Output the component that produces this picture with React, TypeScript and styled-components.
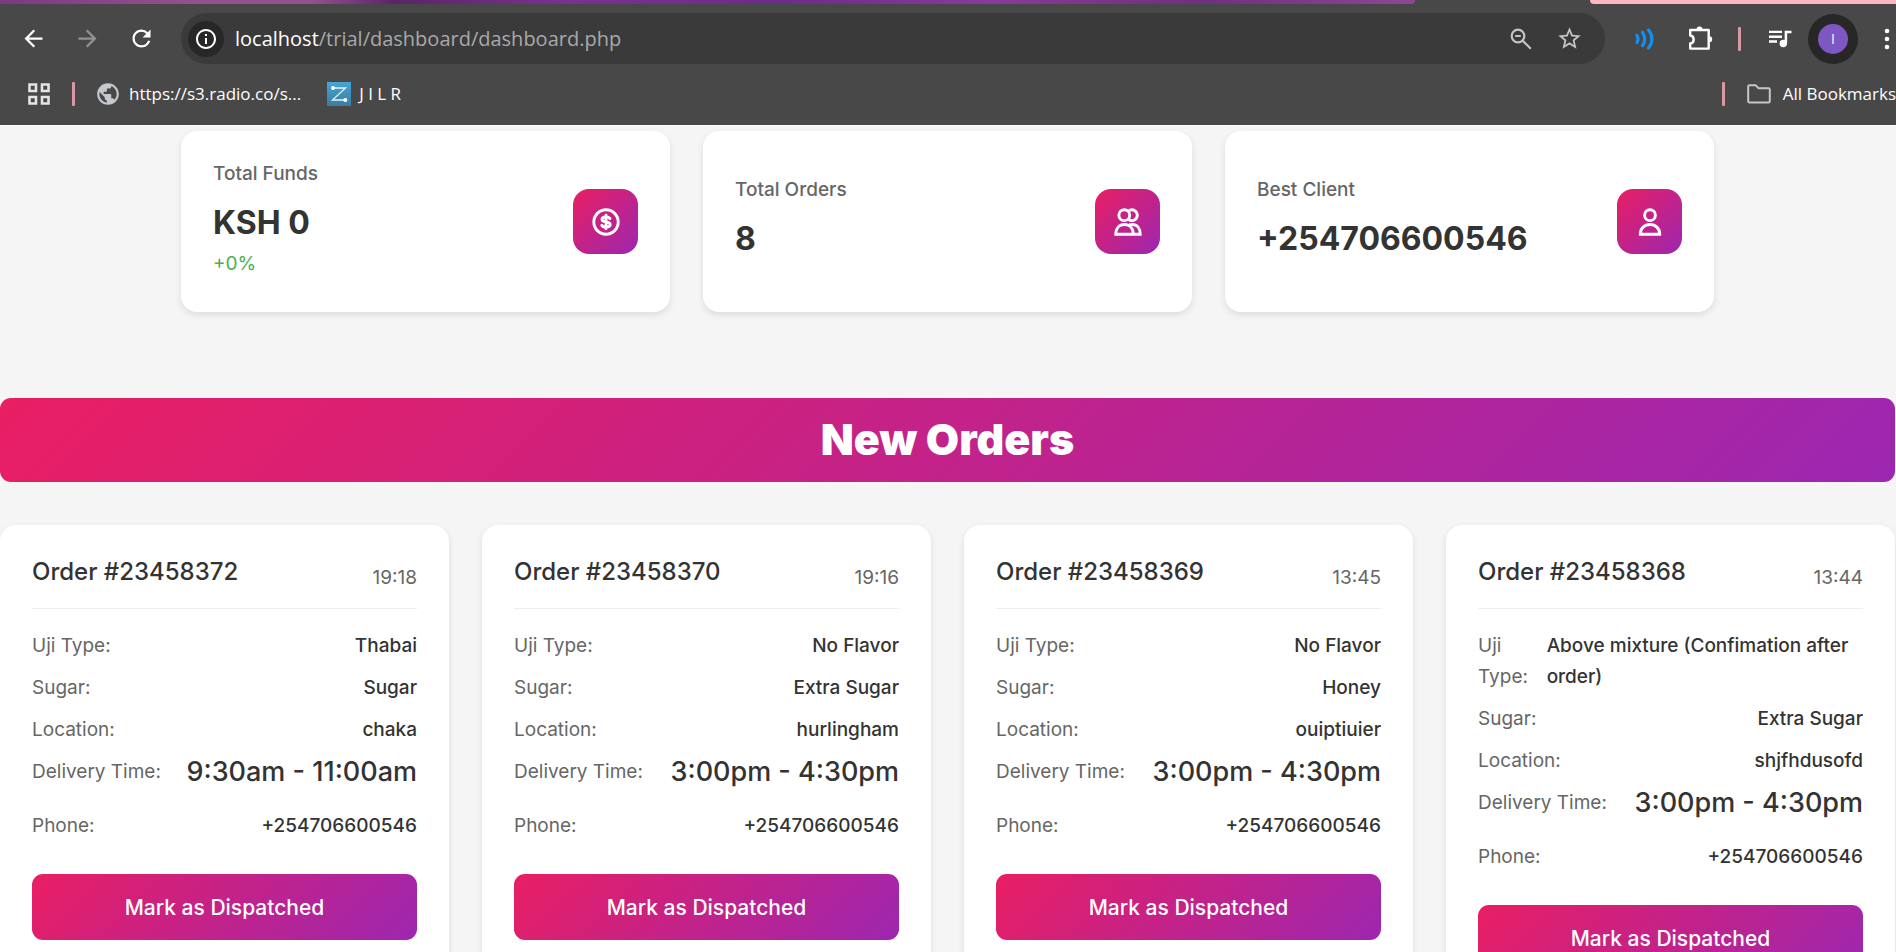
import React from 'react';
import styled, { createGlobalStyle } from 'styled-components';
import {
  MdArrowBack, MdArrowForward, MdRefresh, MdInfoOutline, MdStarBorder, MdPublic,
} from 'react-icons/md';

const brand = 'linear-gradient(135deg, #e91e63, #9c27b0)';

const GlobalStyle = createGlobalStyle`
  *, *::before, *::after { box-sizing: border-box; }
  body { margin: 0; background: #f5f5f5; font-family: Inter, "Liberation Sans", sans-serif; color: #333; }
  h1, h2, p, dl, dd { margin: 0; }
  button, input { font: inherit; }
  svg { display: block; flex: none; }
`;

const Shell = styled.div`
  height: 100vh;
  display: flex;
  flex-direction: column;
  overflow: hidden;
`;

/* Browser frame */
const Chrome = styled.header`
  flex: none;
  background: #484848;
  color: #fff;
  font-family: "Open Sans", "Noto Sans", sans-serif;
  overflow: hidden;
`;

const TabStrip = styled.div`
  display: flex;
  justify-content: space-between;
  height: 4px;
`;

const ThemeArt = styled.div`
  flex: 1415;
  border-bottom-right-radius: 4px;
  background: linear-gradient(90deg, #7c3a80, #95508f 14%, #94508f 22%, #5a2568 28%, #7a3190 40%, #6c2c86 55%, #8a3a98 70%, #6f2f80 85%, #8d4795);
`;

const TabGap = styled.div`
  flex: 175;
`;

const ActiveEdge = styled.div`
  flex: 306;
  border-bottom-left-radius: 6px;
  background: #ffb6c1;
`;

const Toolbar = styled.div`
  display: flex;
  align-items: center;
  padding: 9px 0 0 6px;
`;

const ToolButton = styled.button<{ $w?: number; $dim?: boolean }>`
  flex: none;
  display: flex;
  align-items: center;
  justify-content: center;
  width: ${(p) => p.$w ?? 54}px;
  height: 50px;
  padding: 0;
  border: 0;
  background: none;
  color: ${(p) => (p.$dim ? '#929292' : '#fff')};
`;

const AddressBar = styled.div`
  flex: 1;
  display: flex;
  align-items: center;
  height: 51px;
  margin: 0 12px 0 13px;
  padding: 0 12px 0 7px;
  border-radius: 26px;
  background: #3a3a3a;
  color: #c4c4c4;
`;

const SiteInfo = styled.button`
  display: flex;
  align-items: center;
  justify-content: center;
  width: 36px;
  height: 36px;
  padding: 0;
  border: 0;
  border-radius: 50%;
  background: #272727;
  color: #fff;
`;

const Url = styled.p`
  flex: 1;
  margin-left: 11px;
  font-size: 20px;
  line-height: 28px;
  color: #a9a9a9;
`;

const Host = styled.span`
  color: #fff;
`;

const BarButton = styled.button`
  display: flex;
  align-items: center;
  justify-content: center;
  width: 48px;
  height: 40px;
  padding: 0;
  border: 0;
  background: none;
  color: inherit;
`;

const Divider = styled.span`
  flex: none;
  width: 3px;
  height: 24px;
  border-radius: 1px;
  background: #d79aa5;
`;

const ToolDivider = styled(Divider)`
  margin: 0 11px 0 9px;
`;

const Profile = styled.button`
  flex: none;
  display: flex;
  align-items: center;
  justify-content: center;
  width: 50px;
  height: 50px;
  padding: 0;
  border: 0;
  border-radius: 50%;
  background: #272727;
`;

const Avatar = styled.span`
  width: 30px;
  height: 30px;
  border-radius: 50%;
  background: #7e57c2;
  color: #fff;
  font-size: 14px;
  line-height: 30px;
  text-align: center;
`;

const MenuButton = styled(ToolButton)`
  justify-content: flex-end;
`;

const Bookmarks = styled.nav`
  display: flex;
  align-items: center;
  height: 61px;
  padding: 0 0 2px 28px;
  font-size: 17px;
  line-height: 24px;
  white-space: nowrap;
`;

const AppsButton = styled.button`
  display: flex;
  margin-right: 22px;
  padding: 0;
  border: 0;
  background: none;
  color: #e4e4e4;
`;

const Bookmark = styled.a`
  display: flex;
  align-items: center;
  gap: 8px;
  margin-left: 20px;
  color: #fff;
  text-decoration: none;
  & + & { margin-left: 26px; }
`;

const AllBookmarks = styled.div`
  display: flex;
  align-items: center;
  margin-left: auto;
`;

const FolderLink = styled(Bookmark)`
  gap: 12px;
  margin-left: 22px;
`;

/* Dashboard page */
const Page = styled.main`
  flex: 1;
  overflow-y: auto;
  scrollbar-width: none;
  padding-right: 1px;
  border-top: 1px solid #fff;
  background: #f5f5f5;
`;

const Stats = styled.section`
  display: grid;
  grid-template-columns: repeat(3, 1fr);
  gap: 33px;
  max-width: 1533px;
  margin: 0 auto;
  padding-top: 5px;
`;

const Card = styled.article`
  border-radius: 16px;
  background: #fff;
  box-shadow: 0 3px 7px rgba(0, 0, 0, 0.1);
`;

const StatCard = styled(Card)`
  display: flex;
  align-items: center;
  justify-content: space-between;
  padding: 27px 32px;
`;

const StatText = styled.div`
  padding-bottom: 6px;
  font-size: 19px;
  line-height: 31px;
`;

const StatLabel = styled.p`
  color: #666;
  font-weight: 500;
`;

const StatValue = styled.p`
  margin-top: 8px;
  font-size: 32px;
  line-height: 51px;
  font-weight: 700;
`;

const StatChange = styled.p`
  color: #4caf50;
`;

const StatIcon = styled.span`
  display: flex;
  align-items: center;
  justify-content: center;
  width: 65px;
  height: 65px;
  border-radius: 16px;
  background: ${brand};
  color: #fff;
`;

const Banner = styled.h1`
  margin: 86px 0 43px;
  padding: 15px 16px 17px;
  border-radius: 11px;
  background: ${brand};
  color: #fff;
  font-size: 43px;
  line-height: 52px;
  font-weight: 900;
  text-align: center;
`;

const Orders = styled.section`
  display: grid;
  grid-template-columns: repeat(4, 1fr);
  gap: 33px;
`;

const OrderCard = styled(Card)`
  padding: 32px;
`;

const OrderHead = styled.header`
  display: flex;
  align-items: center;
  justify-content: space-between;
  margin-bottom: 21px;
  padding-bottom: 11px;
  border-bottom: 1px solid #eee;
`;

const OrderTitle = styled.h2`
  margin-bottom: 11px;
  font-size: 24px;
  line-height: 29px;
  font-weight: 500;
`;

const OrderTime = styled.time`
  font-size: 19px;
  line-height: 31px;
  color: #666;
`;

const Detail = styled.div`
  display: flex;
  justify-content: space-between;
  margin-bottom: 11px;
  font-size: 19px;
  line-height: 31px;
`;

const Term = styled.dt`
  color: #666;
`;

const Value = styled.dd<{ $large?: boolean }>`
  font-weight: 500;
  font-size: ${(p) => (p.$large ? 27 : 19)}px;
  margin-bottom: ${(p) => (p.$large ? 12 : 0)}px;
`;

const DispatchButton = styled.button`
  width: 100%;
  height: 66px;
  margin-top: 22px;
  border: 0;
  border-radius: 11px;
  background: ${brand};
  color: #fff;
  font-size: 21px;
  font-weight: 500;
`;

const Drawing = ({ size, stroke = 2.9, children }: { size: number; stroke?: number; children: React.ReactNode }) => (
  <svg width={size} height={size} viewBox="0 0 32 32" fill="none" stroke="currentColor" strokeWidth={stroke} strokeLinejoin="miter" strokeLinecap="round" aria-hidden="true">
    {children}
  </svg>
);

const DollarIcon = () => (
  <Drawing size={32}>
    <circle cx="16" cy="16" r="12.2" />
    <path d="M16 9.2v13.6M20 12.6c-.7-1-2-1.6-4-1.6-2.4 0-4 .9-4 2.5 0 3.7 8.2 1.3 8.2 5 0 1.6-1.7 2.6-4.2 2.6-2 0-3.5-.7-4.2-1.9" />
  </Drawing>
);

const GroupIcon = () => (
  <Drawing size={32}>
    <circle cx="12.3" cy="9.2" r="5.4" />
    <path d="M17.6 4.3a5.4 5.4 0 1 1 0 9.8M3.800 28.200c0-6 3.500-9.700 8.600-9.700s8.800 3.700 8.800 9.700zM17.800 18.900c.8-.3 1.600-.4 2.400-.4 5 0 8 3.700 8 9.700h-7" />
  </Drawing>
);

const UserIcon = () => (
  <Drawing size={32}>
    <circle cx="16" cy="9.2" r="5.4" />
    <path d="M6.3 28.2c0-6 4.2-9.7 9.7-9.7s9.7 3.7 9.7 9.7z" />
  </Drawing>
);

const ZoomOutIcon = () => (
  <svg width="24" height="24" viewBox="0 0 24 24" fill="none" stroke="currentColor" strokeWidth="2.2" aria-hidden="true">
    <circle cx="9" cy="9" r="6.3" />
    <path d="M13.6 13.6l8.2 8.2M6.2 9h5.6" />
  </svg>
);

const WavesIcon = () => (
  <svg width="22" height="24" viewBox="0 0 22 24" fill="none" stroke="#1090f0" strokeWidth="3.2" strokeLinecap="round" aria-hidden="true">
    <path d="M3 8.5c1.3 2.2 1.3 4.8 0 7M8.5 5.3c2.8 4.2 2.8 9.2 0 13.4M14.5 3c4.6 5.5 4.6 12.5 0 18" />
  </svg>
);

const PuzzleIcon = () => (
  <svg width="26" height="26" viewBox="0 0 26 26" fill="none" stroke="#fff" strokeWidth="2.4" strokeLinejoin="round" aria-hidden="true">
    <path d="M2.2 4h18.5v18.6H2.2v-5.1c4.6-.4 4.6-7.6 0-8z" />
    <path d="M8.5 3.5a3 3 0 0 1 6 0zM21.2 10.300a3 3 0 0 1 0 6z" fill="#fff" stroke="none" />
  </svg>
);

const QueueIcon = () => (
  <svg width="26" height="22" viewBox="0 0 26 22" aria-hidden="true">
    <path d="M2 3.9h13M2 8.7h13M2 13.5h8" stroke="#fff" strokeWidth="2.4" />
    <circle cx="16.3" cy="15.5" r="3.7" fill="#fff" />
    <path d="M18.9 15.5V3.9h5.600" fill="none" stroke="#fff" strokeWidth="2.5" />
  </svg>
);

const KebabIcon = () => (
  <svg width="18" height="26" viewBox="0 0 18 26" fill="#fff" aria-hidden="true">
    <circle cx="9" cy="5" r="2.3" />
    <circle cx="9" cy="13" r="2.3" />
    <circle cx="9" cy="21" r="2.3" />
  </svg>
);

const AppsIcon = () => (
  <svg width="22" height="22" viewBox="0 0 22 22" fill="none" stroke="currentColor" strokeWidth="2.6" aria-hidden="true">
    <path d="M1.5 1.5h6.5v6.5H1.5zM14 1.5h6.5v6.5H14zM1.5 14h6.5v6.5H1.5zM14 14h6.5v6.5H14z" />
  </svg>
);

const SiteLogo = () => (
  <svg width="24" height="24" viewBox="0 0 24 24" aria-hidden="true">
    <defs>
      <linearGradient id="siteLogo" x1="0" y1="0" x2="0" y2="1">
        <stop offset="0" stopColor="#44a8d4" />
        <stop offset="1" stopColor="#3c7ba0" />
      </linearGradient>
    </defs>
    <rect width="24" height="24" fill="url(#siteLogo)" />
    <path d="M6 6h12.5L5.5 18H18" fill="none" stroke="#e6f4fb" strokeWidth="1.3" />
    <circle cx="6" cy="6" r="2" fill="#fff" />
    <circle cx="18.3" cy="18" r="2" fill="#fff" />
  </svg>
);

const FolderIcon = () => (
  <svg width="24" height="20" viewBox="0 0 24 20" fill="none" stroke="#c6c6c6" strokeWidth="2" strokeLinejoin="round" aria-hidden="true">
    <path d="M1.2 2.6c0-.8.5-1.3 1.3-1.3h6.3l2.6 2.9h10.1c.8 0 1.3.5 1.3 1.3v11.7c0 .8-.5 1.3-1.3 1.3h-19c-.8 0-1.3-.5-1.3-1.3z" />
  </svg>
);

interface Order {
  id: string;
  time: string;
  type: string;
  sugar: string;
  location: string;
  delivery: string;
}

const PHONE = '+254706600546';

const orders: Order[] = [
  { id: '23458372', time: '19:18', type: 'Thabai', sugar: 'Sugar', location: 'chaka', delivery: '9:30am - 11:00am' },
  { id: '23458370', time: '19:16', type: 'No Flavor', sugar: 'Extra Sugar', location: 'hurlingham', delivery: '3:00pm - 4:30pm' },
  { id: '23458369', time: '13:45', type: 'No Flavor', sugar: 'Honey', location: 'ouiptiuier', delivery: '3:00pm - 4:30pm' },
  { id: '23458368', time: '13:44', type: 'Above mixture (Confimation after order)', sugar: 'Extra Sugar', location: 'shjfhdusofd', delivery: '3:00pm - 4:30pm' },
];

const stats = [
  { label: 'Total Funds', value: 'KSH 0', change: '+0%', icon: <DollarIcon /> },
  { label: 'Total Orders', value: '8', icon: <GroupIcon /> },
  { label: 'Best Client', value: PHONE, icon: <UserIcon /> },
];

const BrowserChrome = () => (
  <Chrome>
    <TabStrip>
      <ThemeArt />
      <TabGap />
      <ActiveEdge />
    </TabStrip>
    <Toolbar>
      <ToolButton aria-label="Back"><MdArrowBack size={27} /></ToolButton>
      <ToolButton aria-label="Forward" $dim><MdArrowForward size={27} /></ToolButton>
      <ToolButton aria-label="Reload"><MdRefresh size={27} /></ToolButton>
      <AddressBar>
        <SiteInfo aria-label="Site information"><MdInfoOutline size={24} /></SiteInfo>
        <Url><Host>localhost</Host>/trial/dashboard/dashboard.php</Url>
        <BarButton aria-label="Zoom"><ZoomOutIcon /></BarButton>
        <BarButton aria-label="Bookmark this page"><MdStarBorder size={27} /></BarButton>
      </AddressBar>
      <ToolButton $w={56} aria-label="Audio extension"><WavesIcon /></ToolButton>
      <ToolButton $w={56} aria-label="Extensions"><PuzzleIcon /></ToolButton>
      <ToolDivider />
      <ToolButton $w={56} aria-label="Media controls"><QueueIcon /></ToolButton>
      <Profile aria-label="Profile"><Avatar>I</Avatar></Profile>
      <MenuButton $w={38} aria-label="Menu"><KebabIcon /></MenuButton>
    </Toolbar>
    <Bookmarks>
      <AppsButton aria-label="Apps"><AppsIcon /></AppsButton>
      <Divider />
      <Bookmark href="#radio"><MdPublic size={26} color="#c5c8cc" />https://s3.radio.co/s...</Bookmark>
      <Bookmark href="#jilr"><SiteLogo />J I L R</Bookmark>
      <AllBookmarks>
        <Divider />
        <FolderLink href="#bookmarks"><FolderIcon />All Bookmarks</FolderLink>
      </AllBookmarks>
    </Bookmarks>
  </Chrome>
);

const OrderItem = ({ order }: { order: Order }) => (
  <OrderCard>
    <OrderHead>
      <OrderTitle>Order #{order.id}</OrderTitle>
      <OrderTime>{order.time}</OrderTime>
    </OrderHead>
    <dl>
      <Detail><Term>Uji Type:</Term><Value>{order.type}</Value></Detail>
      <Detail><Term>Sugar:</Term><Value>{order.sugar}</Value></Detail>
      <Detail><Term>Location:</Term><Value>{order.location}</Value></Detail>
      <Detail><Term>Delivery Time:</Term><Value $large>{order.delivery}</Value></Detail>
      <Detail><Term>Phone:</Term><Value>{PHONE}</Value></Detail>
    </dl>
    <DispatchButton>Mark as Dispatched</DispatchButton>
  </OrderCard>
);

export default function App() {
  return (
    <Shell>
      <GlobalStyle />
      <BrowserChrome />
      <Page>
        <Stats>
          {stats.map((s) => (
            <StatCard key={s.label}>
              <StatText>
                <StatLabel>{s.label}</StatLabel>
                <StatValue>{s.value}</StatValue>
                {s.change && <StatChange>{s.change}</StatChange>}
              </StatText>
              <StatIcon>{s.icon}</StatIcon>
            </StatCard>
          ))}
        </Stats>
        <Banner>New Orders</Banner>
        <Orders>
          {orders.map((o) => <OrderItem key={o.id} order={o} />)}
        </Orders>
      </Page>
    </Shell>
  );
}
